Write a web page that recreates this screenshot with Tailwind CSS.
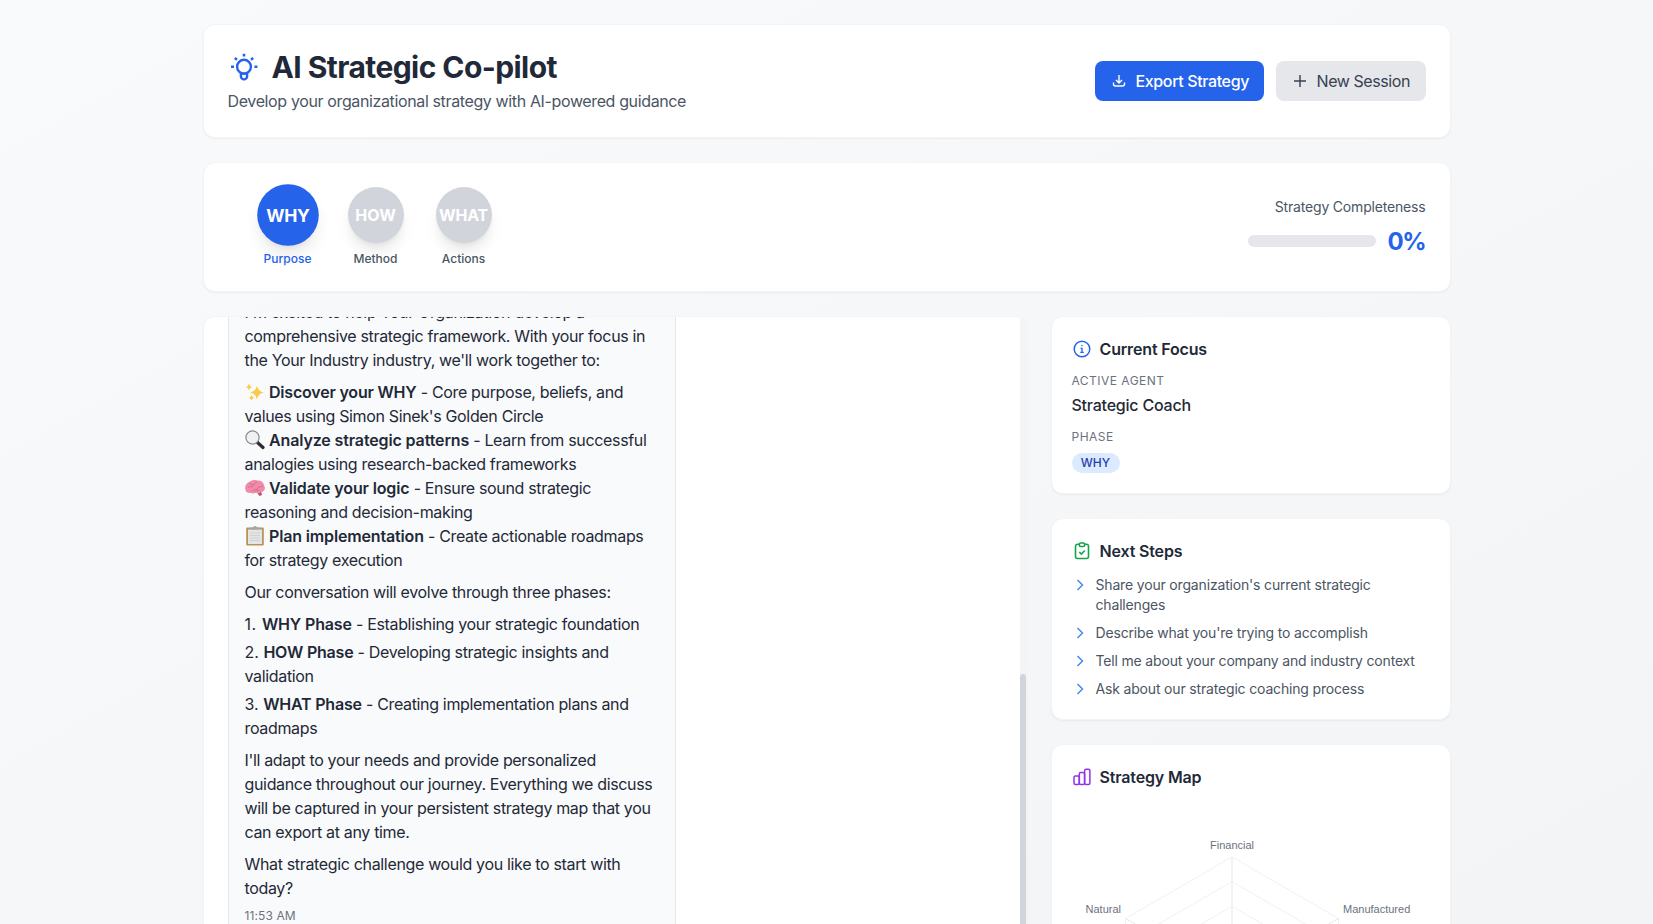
<!DOCTYPE html>
<html lang="en">
<head>
<meta charset="utf-8">
<title>AI Strategic Co-pilot</title>
<script src="https://cdn.jsdelivr.net/npm/@tailwindcss/browser@4"></script>
</head>
<body class="h-[924px] overflow-hidden bg-linear-to-br from-[#f9fafb] to-[#f3f4f6] font-['Inter',sans-serif] text-base text-[#1f2937]">
<div class="mx-auto h-[924px] w-[1280px] overflow-hidden px-4 pt-6">

  <header class="mb-6 flex items-center justify-between rounded-xl border border-[#f3f4f6] bg-white p-6 shadow-[0_1px_2px_rgba(0,0,0,0.05)]">
    <div>
      <h1 class="flex items-center gap-3 whitespace-nowrap text-[30px]/9 font-bold tracking-[-0.57px]">
        <svg class="size-8 text-[#2563eb]" viewBox="0 0 32 32" fill="none" stroke="currentColor" stroke-width="2.4"><circle cx="16" cy="15.7" r="6.9"/><path d="M12.900 21.500v3.800a3.100 3.100 0 0 0 6.200 0V21.500M13 22.600h6" stroke-width="2.4"/><path d="M16 2.800v2.700M3 15.700h3M26.400 15.700h3M6.800 7l2.200 1.700M25.200 7l-2.200 1.700" stroke-width="2.6"/></svg>
        <span>AI Strategic Co-pilot</span>
      </h1>
      <p class="mt-1 whitespace-nowrap tracking-[-0.37px] text-[#4b5563]">Develop your organizational strategy with AI-powered guidance</p>
    </div>
    <div class="flex gap-3">
      <button class="flex h-10 w-[169px] items-center gap-2 whitespace-nowrap rounded-lg bg-[#2563eb] px-4 font-medium tracking-[-0.37px] text-white">
        <svg class="size-4 shrink-0" viewBox="0 0 16 16" fill="none" stroke="currentColor" stroke-width="1.4"><path d="M8 2v7.500M5 7l3 3 3-3M2.500 9.500v1.500a2 2 0 0 0 2 2h7a2 2 0 0 0 2-2V9.500"/></svg><span class="pl-px">Export Strategy</span></button>
      <button class="flex h-10 w-[150px] items-center gap-2 whitespace-nowrap rounded-lg bg-[#e5e7eb] px-4 tracking-[-0.42px] text-[#374151]">
        <svg class="size-4 shrink-0" viewBox="0 0 16 16" fill="none" stroke="currentColor" stroke-width="1.4"><path d="M8 2v12M2 8h12"/></svg><span class="pl-px">New Session</span></button>
    </div>
  </header>

  <section class="mb-6 flex items-center justify-between rounded-xl border border-[#f3f4f6] bg-white p-6 shadow-[0_1px_2px_rgba(0,0,0,0.05)]">
    <div class="flex gap-8 pl-8 text-xs font-medium text-[#4b5563]">
      <div class="flex w-14 flex-col items-center gap-2"><div class="flex size-14 scale-110 items-center justify-center rounded-full bg-[#2563eb] text-base font-bold tracking-[-0.3px] text-white shadow-lg">WHY</div><span class="text-[#2563eb]">Purpose</span></div>
      <div class="flex w-14 flex-col items-center gap-2"><div class="flex size-14 items-center justify-center rounded-full bg-[#d1d5db] text-base font-bold text-white shadow-lg">HOW</div><span>Method</span></div>
      <div class="flex w-14 flex-col items-center gap-2"><div class="flex size-14 items-center justify-center rounded-full bg-[#d1d5db] text-base font-bold tracking-[-0.2px] text-white shadow-lg">WHAT</div><span>Actions</span></div>
    </div>
    <div class="flex flex-col items-end gap-2">
      <div class="text-sm tracking-[-0.18px] text-[#4b5563]">Strategy Completeness</div>
      <div class="flex items-center gap-3"><div class="h-3 w-32 rounded-full bg-[#e5e7eb]"></div><span class="w-[38px] whitespace-nowrap pt-px text-2xl/[31px] font-bold tracking-[-1.4px] text-[#2563eb]">0%</span></div>
    </div>
  </section>

  <main class="grid grid-cols-3 gap-6">
    <div class="col-span-2 flex h-[700px] overflow-hidden rounded-xl border border-[#f3f4f6] bg-white shadow-[0_1px_2px_rgba(0,0,0,0.05)]">
      <div class="flex-1 pl-6">
        <article class="-mt-[17px] h-[720px] w-[448px] whitespace-nowrap border-x border-[#e5e7eb] bg-[#f9fafb] px-4 tracking-[-0.34px]">
          <p class="mb-2">I'm excited to help Your Organization develop a<br>comprehensive strategic framework. With your focus in<br>the Your Industry industry, we'll work together to:</p>
          <p class="mb-2">
            <svg class="mr-[4.5px] inline-block size-5 align-[-4px]" viewBox="0 0 20 20" fill="#fbcb45"><path d="M12 3.500q1 6 6.800 7Q13 11.500 12 17.500q-1-6-6.800-7Q11 9.500 12 3.500Z"/><path d="M4 1.500q.5 3 3 3.500-2.500.5-3 3.500-.5-3-3-3.500 2.500-.5 3-3.500ZM6.500 13q.5 2.200 2.700 2.700-2.200.5-2.700 3-.5-2.500-2.700-3 2.200-.5 2.700-2.700Z"/></svg><strong class="font-semibold tracking-[-0.2px]">Discover your WHY</strong> - Core purpose, beliefs, and<br>values using Simon Sinek's Golden Circle<br>
            <svg class="mr-[4.5px] inline-block size-5 align-[-4px]" viewBox="0 0 20 20" fill="none"><path d="m12.500 12.500 5.500 5" stroke="#2c2c2e" stroke-width="3.200" stroke-linecap="round"/><circle cx="7.500" cy="7.500" r="6.600" fill="#eef2f4" stroke="#85898d" stroke-width="1.200"/></svg><strong class="font-semibold tracking-[-0.13px]">Analyze strategic patterns</strong> - Learn from successful<br>analogies using research-backed frameworks<br>
            <svg class="mr-[4.5px] inline-block size-5 align-[-4px]" viewBox="0 0 20 20" fill="none"><path d="M11.500 14l3 4 2.500-1-1-4Z" fill="#b9506f"/><path d="M.5 12C-1 8 2 5 4 4 7 1.500 11 1.500 13 2.500c4 0 6 3 6.300 5.500 1.500 3 0 6-3.300 6-2 2-4 1-5 .5-2 1.500-4 1-5 .5C3 15.500.5 14 .5 12Z" fill="#f08bac"/><path d="M3 10c2-3 3 0 5-2s1-3 4-4M7 13c2-3 5 0 6-3s3 0 5-2M5 5c0 2 2 2 3 1M10 14c0-2 3-1 5-2" stroke="#cf6488" stroke-width=".8"/></svg><strong class="font-semibold tracking-[-0.13px]">Validate your logic</strong> - Ensure sound strategic<br>reasoning and decision-making<br>
            <svg class="mr-[4.5px] inline-block size-5 align-[-4px]" viewBox="0 0 20 20"><rect x="1.200" y="1.500" width="17.600" height="18" rx="1" fill="#b8935d"/><rect x="3" y="3.500" width="14" height="14.500" fill="#e3e4e4"/><path d="M5 1.500h3a2 1.500 0 0 1 4 0h3v2H5Z" fill="#a4a7a9"/><path d="M5 7h10M5 9.500h10M5 12h10M5 14.500h10" stroke="#d0d2d3"/></svg><strong class="font-semibold tracking-[-0.15px]">Plan implementation</strong> - Create actionable roadmaps<br>for strategy execution</p>
          <p class="mb-2">Our conversation will evolve through three phases:</p>
          <div class="mb-2 flex flex-col gap-1">
            <p><span class="tracking-[0.6px]">1. </span><strong class="font-semibold tracking-[-0.15px]">WHY Phase</strong> - Establishing your strategic foundation</p>
            <p><span class="tracking-normal">2. </span><strong class="font-semibold tracking-[-0.2px]">HOW Phase</strong> - Developing strategic insights and<br>validation</p>
            <p><span class="tracking-normal">3. </span><strong class="font-semibold tracking-[-0.2px]">WHAT Phase</strong> - Creating implementation plans and<br>roadmaps</p>
          </div>
          <p class="mb-2">I'll adapt to your needs and provide personalized<br>guidance throughout our journey. Everything we discuss<br>will be captured in your persistent strategy map that you<br>can export at any time.</p>
          <p class="mb-2">What strategic challenge would you like to start with<br>today?</p>
          <time class="block text-xs tracking-[0.1px] text-[#6b7280]">11:53 AM</time>
        </article>
      </div>
      <div class="w-1.5 bg-[#f3f4f6] pt-[357px]"><div class="h-[400px] rounded-[3px] bg-[#d1d5db]"></div></div>
    </div>

    <aside class="flex flex-col gap-6">
      <section class="h-[178px] rounded-xl border border-[#f3f4f6] bg-white p-5 shadow-[0_1px_2px_rgba(0,0,0,0.05)]">
        <h2 class="mb-3 flex items-center gap-2 font-semibold tracking-[-0.16px]"><svg class="size-5 text-[#2563eb]" viewBox="0 0 20 20" fill="none" stroke="currentColor" stroke-width="1.500"><circle cx="10" cy="10" r="7.800"/><path d="M8.500 9.300H10v4M8.300 13.300h3.500M9.300 6.700h1.300" stroke-width="1.300"/></svg>Current Focus</h2>
        <div class="text-xs tracking-[0.48px] text-[#6b7280]">ACTIVE AGENT</div>
        <div class="mt-1 font-medium tracking-[-0.22px]">Strategic Coach</div>
        <div class="mt-3 text-xs tracking-[0.48px] text-[#6b7280]">PHASE</div>
        <div class="mt-2 flex h-5 w-12 items-center justify-center rounded-full bg-[#dbeafe] text-xs font-medium text-[#1e40af]">WHY</div>
      </section>
      <section class="rounded-xl border border-[#f3f4f6] bg-white p-5 shadow-[0_1px_2px_rgba(0,0,0,0.05)]">
        <h2 class="mb-3 flex items-center gap-2 font-semibold tracking-[-0.16px]"><svg class="size-5 text-[#16a34a]" viewBox="0 0 20 20" fill="none" stroke="currentColor" stroke-width="1.600"><path d="M7 3.200H5.500a2 2 0 0 0-2 2v10.300a2 2 0 0 0 2 2h9a2 2 0 0 0 2-2V5.200a2 2 0 0 0-2-2H13"/><rect x="7.300" y="2" width="5.400" height="3.500" rx="1.500"/><path d="m7.300 11 2 2 3.500-3.500"/></svg>Next Steps</h2>
        <ul class="flex flex-col gap-2 whitespace-nowrap text-sm tracking-[-0.17px] text-[#4b5563]">
          <li class="flex gap-2"><svg class="mt-0.5 size-4 text-[#3b82f6]" viewBox="0 0 16 16" fill="none" stroke="currentColor" stroke-width="1.400"><path d="m5.500 3 5 5-5 5"/></svg><span>Share your organization's current strategic<br>challenges</span></li>
          <li class="flex gap-2"><svg class="mt-0.5 size-4 text-[#3b82f6]" viewBox="0 0 16 16" fill="none" stroke="currentColor" stroke-width="1.400"><path d="m5.500 3 5 5-5 5"/></svg><span>Describe what you're trying to accomplish</span></li>
          <li class="flex gap-2"><svg class="mt-0.5 size-4 text-[#3b82f6]" viewBox="0 0 16 16" fill="none" stroke="currentColor" stroke-width="1.400"><path d="m5.500 3 5 5-5 5"/></svg><span>Tell me about your company and industry context</span></li>
          <li class="flex gap-2"><svg class="mt-0.5 size-4 text-[#3b82f6]" viewBox="0 0 16 16" fill="none" stroke="currentColor" stroke-width="1.400"><path d="m5.500 3 5 5-5 5"/></svg><span>Ask about our strategic coaching process</span></li>
        </ul>
      </section>
      <section class="rounded-xl border border-[#f3f4f6] bg-white p-5 shadow-[0_1px_2px_rgba(0,0,0,0.05)]">
        <h2 class="mb-3 flex items-center gap-2 font-semibold tracking-[-0.16px]"><svg class="size-5 text-[#9333ea]" viewBox="0 0 20 20" fill="none" stroke="currentColor" stroke-width="1.500"><rect x="2" y="9" width="5.300" height="8.500" rx="1.500"/><rect x="7.300" y="5.600" width="5.300" height="11.900" rx="1.500"/><rect x="12.600" y="2.200" width="5.300" height="15.300" rx="1.500"/></svg>Strategy Map</h2>
        <svg class="h-[320px] w-[358px]" viewBox="0.5 0 358 320" fill="none" stroke="#e5e7eb" stroke-opacity=".6">
          <path d="M160.500 56 267 117.500v123L160.500 302 54 240.500v-123ZM160.500 80.600l85.200 49.200v98.400l-85.200 49.200-85.200-49.200v-98.400ZM160.500 105.200l63.900 36.900v73.800l-63.900 36.900-63.900-36.900v-73.800Z"/>
          <path d="M160.500 56v246M54 117.500l213 123M267 117.500l-213 123" stroke-opacity="1"/>
          <g fill="#6b7280" stroke="none" font-family="Liberation Sans, sans-serif" font-size="11"><text x="160.500" y="48" text-anchor="middle">Financial</text><text x="49.500" y="112" text-anchor="end">Natural</text><text x="271.500" y="112">Manufactured</text></g>
        </svg>
      </section>
    </aside>
  </main>
</div>
</body>
</html>
